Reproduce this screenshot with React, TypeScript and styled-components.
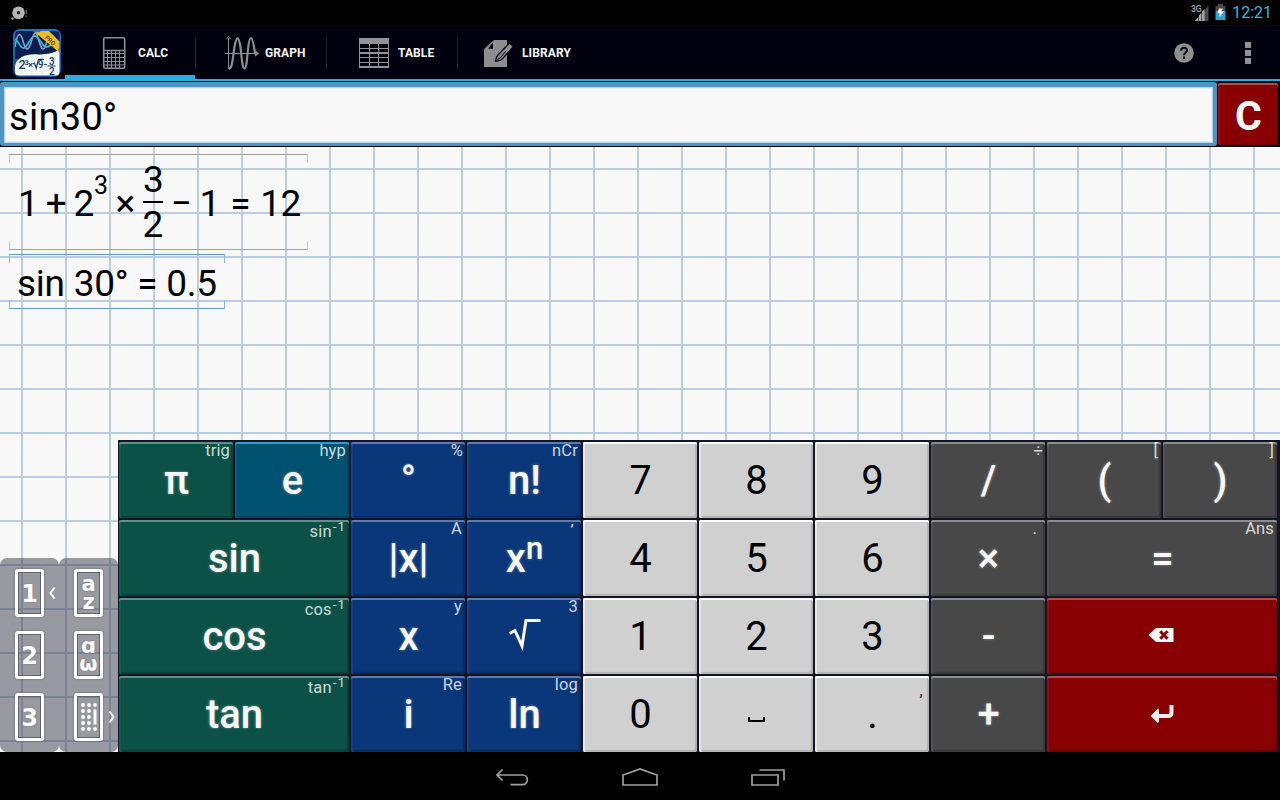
import React from "react";
import styled, { createGlobalStyle } from "styled-components";

const Global = createGlobalStyle`
  * { box-sizing: border-box; }
  body { margin: 0; background: #000; font-family: Roboto, "Liberation Sans", sans-serif; }
`;

const Screen = styled.div`
  width: 1280px;
  height: 800px;
  display: flex;
  flex-direction: column;
  overflow: hidden;
  background: #000;
`;

const StatusBar = styled.header`
  height: 25px;
  display: flex;
  align-items: center;
  justify-content: space-between;
  padding: 0 8px 0 10px;
`;

const StatusRight = styled.div`
  display: flex;
  align-items: center;
  gap: 5px;
`;

const Clock = styled.span`
  color: #33b5e5;
  font-size: 16px;
  line-height: 25px;
  width: 40px;
  text-align: right;
`;

const ActionBar = styled.nav`
  height: 56px;
  display: flex;
  background: #01000f;
  border-top: 1px solid #0a0a14;
  border-bottom: 2px solid #30abdf;
`;

const Logo = styled.div`
  width: 65px;
  padding: 2px 0 0 12px;
  svg { display: block; }
`;

const Tab = styled.button<{ $active?: boolean; $width: number; $pad: number; $gap: number; $last?: boolean }>`
  width: ${(p) => p.$width}px;
  height: 53px;
  padding: 0 0 0 ${(p) => p.$pad}px;
  border: 0;
  background:
    linear-gradient(#30abdf, #30abdf) 0 100% / ${(p) => (p.$active ? "130px 4px" : "0 0")} no-repeat,
    linear-gradient(#24242e, #24242e) right 11px / ${(p) => (p.$last ? "0 0" : "1px 32px")} no-repeat;
  display: flex;
  align-items: flex-start;
  gap: ${(p) => p.$gap}px;
  color: #f5f5f5;
  font: 700 12px/55px Roboto, "Liberation Sans", sans-serif;
  letter-spacing: 0.1px;
  text-align: left;
  svg { flex: none; margin-top: 9px; }
`;

const Spacer = styled.div`
  flex: 1;
`;

const BarIcon = styled.div<{ $width: number }>`
  width: ${(p) => p.$width}px;
  display: flex;
  align-items: center;
  justify-content: center;
`;

const InputRow = styled.div`
  height: 66px;
  display: flex;
  padding: 1px 2px 1px 0;
  gap: 1px;
`;

const Entry = styled.div`
  flex: none;
  width: 1217px;
  height: 64px;
  border: 4px solid #4f95c2;
  border-width: 5px 4px 3px;
  border-radius: 3px;
  background: #f8f8f8;
  box-shadow: inset 0 0 0 1px #b9d3e8, inset 0 0 0 2px #e6eef5;
  padding: 0 0 0 5px;
  color: #000;
  font-size: 38px;
  letter-spacing: 0.3px;
  line-height: 60px;
`;

const ClearKey = styled.button`
  flex: none;
  width: 60px;
  height: 62px;
  margin-top: 1px;
  padding: 0 0 0 1px;
  border: 0;
  border-radius: 2px;
  background: #880000;
  box-shadow: inset 0 2px 0 #b84c4c, inset 2px 0 1px #981010, inset -1px -1px 1px #6c0000;
  color: #f8f8f8;
  font: 700 41px/66px Roboto, "Liberation Sans", sans-serif;
`;

const Workspace = styled.main`
  height: 605px;
  display: flex;
  flex-direction: column;
  background:
    linear-gradient(90deg, #bbcde1 2px, transparent 2px) 21px 0 / 44px 44px,
    linear-gradient(#bbcde1 2px, transparent 2px) 0 21px / 44px 44px,
    #f8f8f8;
`;

const History = styled.section`
  height: 293px;
  display: flex;
  flex-direction: column;
  align-items: flex-start;
  gap: 4px;
  padding: 7px 0 0 9px;
`;

const HistoryItem = styled.div<{ $color: string; $side: string; $width: number; $height: number }>`
  position: relative;
  width: ${(p) => p.$width}px;
  height: ${(p) => p.$height}px;
  display: flex;
  align-items: center;
  padding-left: 8px;
  font-size: 37px;
  color: #000;
  &::before, &::after {
    content: "";
    position: absolute;
    left: 0;
    right: 0;
    height: 8px;
    border: 1px solid ${(p) => p.$side};
  }
  &::before { top: 0; border-bottom: 0; border-top-color: ${(p) => p.$color}; }
  &::after { bottom: 0; border-top: 0; border-bottom-color: ${(p) => p.$color}; }
`;

const Term = styled.span<{ $width: number }>`
  width: ${(p) => p.$width}px;
  flex: none;
  padding-top: 4px;
  line-height: 44px;
  letter-spacing: -0.6px;
  text-align: center;
  white-space: pre;
`;

const Exponent = styled(Term)`
  font-size: 25px;
  padding: 0 0 32px;
`;

const Fraction = styled.span`
  width: 20px;
  display: flex;
  flex-direction: column;
  align-items: center;
  line-height: 44px;
`;

const FractionPart = styled.span<{ $top?: boolean }>`
  height: 44px;
  ${(p) => (p.$top ? "border-bottom: 2px solid #000; width: 20px; height: 46px; line-height: 46px; text-align: center;" : "")}
`;

const Result = styled.span`
  line-height: 55px;
  padding-top: 4px;
  white-space: pre;
  letter-spacing: -0.25px;
`;

const Lower = styled.section`
  height: 312px;
  display: flex;
  align-items: flex-end;
`;

const Drawer = styled.aside`
  width: 59px;
  height: 194px;
  border-radius: 7px;
  background: rgba(56, 57, 74, 0.5);
  display: flex;
  flex-direction: column;
  gap: 14px;
  padding: 11px 0 0 15px;
`;

const DrawerRow = styled.div`
  display: flex;
  align-items: center;
  height: 48px;
  gap: 5px;
`;

const Switch = styled.button`
  width: 29px;
  height: 48px;
  flex: none;
  padding: 0;
  border: 3px solid #fff;
  border-radius: 3px;
  background: none;
  box-shadow: 0 0 2px #55555c, inset 0 0 0 1px #62626a;
  display: flex;
  flex-direction: column;
  align-items: center;
  justify-content: center;
  color: #fff;
  text-shadow: 0 0 2px #77777d;
  font: 700 24px/24px "DejaVu Sans", sans-serif;
`;

const Numeral = styled.span`
  padding-top: 2px;
`;

const Letter = styled.span`
  font-size: 21px;
  line-height: 18px;
  height: 18px;
`;

const Keypad = styled.div`
  width: 1162px;
  height: 312px;
  padding: 2px 3px 0 1px;
  background: #131426;
  display: grid;
  grid-template-columns: repeat(10, 114px);
  grid-auto-rows: 76px;
  gap: 2px;
`;

const tones = {
  green: { bg: "#0b5147", top: "#5f9187", side: "#126052", low: "#084038", fg: "#f8f8f8" },
  teal: { bg: "#00506f", top: "#23a0d4", side: "#075d83", low: "#004059", fg: "#f8f8f8" },
  blue: { bg: "#093779", top: "#5c7bae", side: "#17458a", low: "#072a60", fg: "#f8f8f8" },
  light: { bg: "#d0d0d0", top: "#fafafa", side: "#e9e9e9", low: "#b2b2b2", fg: "#000" },
  dark: { bg: "#484848", top: "#8d8d8d", side: "#535353", low: "#393939", fg: "#f8f8f8" },
  red: { bg: "#880000", top: "#b84c4c", side: "#990c0c", low: "#700000", fg: "#f8f8f8" },
};
type Tone = keyof typeof tones;

const Key = styled.button<{ $tone: Tone; $span?: number }>`
  position: relative;
  grid-column: span ${(p) => p.$span || 1};
  padding: 0 0 0 1px;
  border: 0;
  border-radius: 2px;
  background: ${(p) => tones[p.$tone].bg};
  box-shadow: inset 0 2px 0 ${(p) => tones[p.$tone].top}, inset 2px 0 1px ${(p) => tones[p.$tone].side},
    inset -2px -2px 1px ${(p) => tones[p.$tone].low};
  color: ${(p) => tones[p.$tone].fg};
  font: ${(p) => (p.$tone === "light" ? 400 : 500)} 40px/78px Roboto, "Liberation Sans", sans-serif;
  text-shadow: ${(p) => (p.$tone === "light" ? "none" : "0 0 3px rgba(255,255,255,.4)")};
  display: flex;
  justify-content: center;
  align-items: center;
`;

const Label = styled.span`
  height: 76px;
  white-space: pre;
`;

const Raised = styled.span`
  font-size: 31px;
  position: relative;
  top: -13px;
`;

const Hint = styled.span<{ $top?: number; $right?: number; $dark?: boolean }>`
  position: absolute;
  top: ${(p) => p.$top ?? -1}px;
  right: ${(p) => p.$right ?? 3}px;
  color: ${(p) => (p.$dark ? "#222" : "rgba(255,255,255,.8)")};
  font-size: 16.5px;
  font-weight: 400;
  line-height: 19px;
  letter-spacing: 0.15px;
  text-shadow: none;
`;

const HintPower = styled.span`
  font-size: 13.5px;
  letter-spacing: 1px;
  margin-left: 1px;
  position: relative;
  top: -6px;
`;

const NavBar = styled.footer`
  height: 48px;
  display: flex;
  justify-content: center;
  align-items: center;
  padding-top: 3px;
  background: #000;
`;

const NavButton = styled.div`
  width: 128px;
  display: flex;
  justify-content: center;
  svg { display: block; }
`;

const SpoolIcon = () => (
  <svg width="18" height="16" viewBox="0 0 18 16">
    <circle cx="8.5" cy="7.7" r="6.3" fill="#b4b4b4" />
    <circle cx="8.5" cy="7.7" r="1.7" fill="#222" />
    <circle cx="2.6" cy="13.5" r="1.3" fill="#999" />
    <path d="M16.2 5v4M16.2 10.5v1.4" stroke="#777" strokeWidth="1.2" />
  </svg>
);

const SignalIcon = () => (
  <svg width="20" height="20" viewBox="0 0 20 20">
    <text x="1" y="8.500" fontFamily="Roboto" fontWeight="500" fontSize="8.5" fill="#aaa">3G</text>
    <path d="M5 18L18.500 2.500v15.500z" fill="#4b4b4b" />
    <path d="M5 18l3-3.500V18zM9 18v-5.500l2.200-2.700V18zM12.200 18V8.500l2.300-2.800V18z" fill="#a8a8a8" />
  </svg>
);

const BatteryIcon = () => (
  <svg width="12" height="17" viewBox="0 0 12 17">
    <path d="M3 0h5v2h2.500v5h-10V2H3z" fill="#484848" />
    <path d="M.5 7h10v9H.5z" fill="#2fa5d2" />
    <path d="M4 4.500h4L6.500 7.500h2.300L4.500 13V9H2.500z" fill="#f2f2f2" />
  </svg>
);

const AppLogo = () => (
  <svg width="50" height="50" viewBox="0 0 50 50">
    <defs>
      <clipPath id="tile"><rect x="3" y="3" width="44.500" height="44.500" rx="4" /></clipPath>
      <linearGradient id="rim" x1="0" y1="0" x2="0" y2="1">
        <stop offset="0" stopColor="#1377cf" /><stop offset="1" stopColor="#0b4f9c" />
      </linearGradient>
    </defs>
    <rect x="1" y="1" width="48" height="48" rx="6.500" fill="url(#rim)" />
    <g clipPath="url(#tile)">
      <path d="M3 3h45v28H3z" fill="#061f4e" />
      <path d="M3 38C5 29 15 25.500 26 26.500C36 26 44 25 49 20V48H3z" fill="#f6fafc" />
      <path d="M10 31v17M20 27v20M30 27v20M40 25v22M3 43h45" stroke="#cfe9f3" strokeWidth=".7" />
      <path d="M3 19C5.500 3 8.500 4 11 13S16 25 19.500 13S24.500 4 27 13S32 25 35 13S39 5 42 18" fill="none" stroke="#9b98e6" strokeWidth="1.600" />
      <path d="M3 11C7 13 8 21 12 20C16 19 18 8 23 8C28 9 30 19 34 19C38 19 40 14 45 16" fill="none" stroke="#27c7bd" strokeWidth="1.700" />
      <path d="M20 2h16l12 12v11z" fill="#efbb2e" />
      <path d="M20 2h6l3 2-6 .5zM48 20v6l-2-5z" fill="#8c6714" />
    </g>
    <text x="32.500" y="10" transform="rotate(43 32.500 10)" fontFamily="Roboto" fontWeight="500" fontSize="6" fill="#4c3a12">PRO</text>
    <g fontFamily="Roboto" fontWeight="500" fill="#173b69">
      <text x="6.500" y="40.500" fontSize="12.500">2</text><text x="12.500" y="36.500" fontSize="7.500">3</text>
      <text x="16" y="40" fontSize="9.500">×</text><text x="25.800" y="40" fontSize="10">9</text>
      <text x="31.500" y="40" fontSize="11">-</text><text x="37" y="36.500" fontSize="10">3</text><text x="37" y="46.500" fontSize="10">2</text>
    </g>
    <path d="M21 36l1.500-.8 1.800 5L26.500 31.300h5.500M35.500 38h8" fill="none" stroke="#173b69" strokeWidth="1.200" />
  </svg>
);

const CalcIcon = () => (
  <svg width="26" height="36" viewBox="0 0 26 36" fill="none" stroke="#8f8f91">
    <rect x="2.700" y="2.800" width="21" height="30.500" rx="1.500" strokeWidth="1.600" />
    <path d="M2.700 15.500h21" strokeWidth="1.500" />
    <path d="M3 18.500h20M3 22.500h20M3 26.500h20M3 30h20M6.500 16v17M10.500 16v17M14.500 16v17M18.500 16v17" strokeWidth="1.100" />
  </svg>
);

const GraphIcon = () => (
  <svg width="36" height="36" viewBox="0 0 36 36" fill="none" stroke="#8f8f91">
    <path d="M4.500 3v31M1 18.500h31M2.500 4l2-2.500 2 2.500" strokeWidth="1" />
    <path d="M31 15.800l4 2.700-4 2.700z" fill="#8f8f91" strokeWidth=".5" />
    <path d="M4.500 33C8 36 8.500 24 10.500 12C12.500 .5 14.500 .5 16.500 12C18 26 18.500 33.500 20.500 33.500C22.500 33.500 23 24 24 14C25 5 26 3 27 3C29 3 30 12 31 18.500" strokeWidth="2.200" />
  </svg>
);

const TableIcon = () => (
  <svg width="32" height="36" viewBox="0 0 32 36" fill="none" stroke="#939393">
    <path d="M1 3h30v6H1z" fill="#939393" stroke="none" />
    <path d="M1.500 3v30M11.500 9v23M20.500 9v23M30.500 3v30" strokeWidth="1" />
    <path d="M1 13.500h30M1 22.500h30M1 27.500h30" strokeWidth="1" />
    <path d="M1 18h30M1 32h30" strokeWidth="2" />
  </svg>
);

const LibraryIcon = () => (
  <svg width="31" height="36" viewBox="0 0 31 36">
    <path d="M11 5H24v27H1V14z" fill="#8d8d8d" />
    <path d="M5 13.500l5-6v6.500z" fill="#01000f" />
    <path d="M26.500 8L17.500 17.500Q13 21 12.500 26Q18 26.500 21.500 21.500L30.500 11.500z" fill="#8d8d8d" stroke="#01000f" strokeWidth="1.300" />
    <path d="M13.500 25.500Q17 24 22.500 16.500" stroke="#01000f" fill="none" />
  </svg>
);

const RootIcon = () => (
  <svg width="34" height="38" viewBox="0 0 34 38">
    <path d="M1.500 16.500l5.500-3 7 15.500L18 3.500h14.500" fill="none" stroke="#f8f8f8" strokeWidth="3" />
  </svg>
);

const SpaceIcon = () => (
  <svg width="17" height="76" viewBox="0 0 17 76">
    <path d="M1 41v4h15v-4" fill="none" stroke="#000" strokeWidth="2" />
  </svg>
);

const GlyphShift = styled.span<{ $x: number; $y: number }>`
  display: flex;
  padding: 0 ${(p) => p.$x}px ${(p) => p.$y}px 0;
`;

const DeleteIcon = () => (
  <GlyphShift $x={3} $y={3}>
    <svg width="26" height="16" viewBox="0 0 26 16">
      <path d="M.5 8L8 1H25.500v14H8z" fill="#f8f8f8" />
      <path d="M12.200 4.200l7.400 7.600M19.600 4.200l-7.400 7.600" stroke="#880000" strokeWidth="3" />
    </svg>
  </GlyphShift>
);

const EnterIcon = () => (
  <GlyphShift $x={1} $y={1}>
    <svg width="24" height="20" viewBox="0 0 24 20">
      <path d="M21.500 1v7.500q0 3.500-3.500 3.500H8" fill="none" stroke="#eee" strokeWidth="4" />
      <path d="M.5 12l7.500-7.500 1 1v12l-1 1.500z" fill="#eee" />
    </svg>
  </GlyphShift>
);

const DotsIcon = () => (
  <svg width="18" height="30" viewBox="0 0 18 30">
    {[2, 8, 14, 20, 26].map((y) => [3, 9, 15].map((x) => (
      x === 15 && y > 2 && y < 26 ? null : <circle key={`${x}-${y}`} cx={x} cy={y + 1} r="1.900" fill="#fff" />
    )))}
    <path d="M15 7.500v15" stroke="#fff" strokeWidth="3" />
  </svg>
);

const Chevron = ({ right }: { right?: boolean }) => (
  <svg width="7" height="14" viewBox="0 0 7 14">
    <path d={right ? "M1.500 1.500l4 5.500-4 5.500" : "M5.500 1.500l-4 5.500 4 5.500"} fill="none" stroke="#fff" strokeWidth="2" />
  </svg>
);

type KeySpec = { tone: Tone; label?: string; art?: React.ReactNode; raised?: string; hint?: React.ReactNode; span?: number; hintTop?: number; hintRight?: number };

const inverse = (name: string) => <>{name}<HintPower>-1</HintPower></>;

const keys: KeySpec[] = [
  { tone: "green", label: "π", hint: "trig" },
  { tone: "teal", label: "e", hint: "hyp" },
  { tone: "blue", label: "°", hint: "%", hintRight: 2 },
  { tone: "blue", label: "n!", hint: "nCr" },
  { tone: "light", label: "7" },
  { tone: "light", label: "8" },
  { tone: "light", label: "9" },
  { tone: "dark", label: "/", hint: "÷", hintRight: 2 },
  { tone: "dark", label: "(", hint: "[" },
  { tone: "dark", label: ")", hint: "]" },
  { tone: "green", label: "sin", hint: inverse("sin"), span: 2, hintTop: 2 },
  { tone: "blue", label: "|x|", hint: "A" },
  { tone: "blue", label: "x", raised: "n", hint: "‚", hintTop: -10, hintRight: 7 },
  { tone: "light", label: "4" },
  { tone: "light", label: "5" },
  { tone: "light", label: "6" },
  { tone: "dark", label: "×", hint: ".", hintRight: 8 },
  { tone: "dark", label: "=", hint: "Ans", span: 2 },
  { tone: "green", label: "cos", hint: inverse("cos"), span: 2, hintTop: 2 },
  { tone: "blue", label: "x", hint: "y" },
  { tone: "blue", art: <RootIcon />, hint: "3" },
  { tone: "light", label: "1" },
  { tone: "light", label: "2" },
  { tone: "light", label: "3" },
  { tone: "dark", label: "-" },
  { tone: "red", art: <DeleteIcon />, span: 2 },
  { tone: "green", label: "tan", hint: inverse("tan"), span: 2, hintTop: 2 },
  { tone: "blue", label: "i", hint: "Re" },
  { tone: "blue", label: "ln", hint: "log" },
  { tone: "light", label: "0" },
  { tone: "light", art: <SpaceIcon /> },
  { tone: "light", label: ".", hint: ",", hintTop: 5, hintRight: 6 },
  { tone: "dark", label: "+" },
  { tone: "red", art: <EnterIcon />, span: 2 },
];

export default function App() {
  return (
    <Screen>
      <Global />
      <StatusBar>
        <SpoolIcon />
        <StatusRight>
          <SignalIcon />
          <BatteryIcon />
          <Clock>12:21</Clock>
        </StatusRight>
      </StatusBar>
      <ActionBar>
        <Logo><AppLogo /></Logo>
        <Tab $active $width={131} $pad={36} $gap={11}><CalcIcon />CALC</Tab>
        <Tab $width={131} $pad={28} $gap={5}><GraphIcon />GRAPH</Tab>
        <Tab $width={131} $pad={31} $gap={8}><TableIcon />TABLE</Tab>
        <Tab $width={140} $pad={25} $gap={8} $last><LibraryIcon />LIBRARY</Tab>
        <Spacer />
        <BarIcon $width={64}>
          <svg width="20" height="20" viewBox="0 0 20 20">
            <circle cx="10" cy="10" r="9.800" fill="#8f8f8f" />
            <path d="M7 7.600Q7.200 4.800 10 4.800T13 7.500C13 9.500 10 9.500 10 12.300M10 13.500v2.500" fill="none" stroke="#0a0a12" strokeWidth="2.100" />
          </svg>
        </BarIcon>
        <BarIcon $width={64}>
          <svg width="6" height="22" viewBox="0 0 6 22"><path d="M0 0h6v6H0zM0 8h6v6H0zM0 16h6v6H0z" fill="#929292" /></svg>
        </BarIcon>
      </ActionBar>
      <InputRow>
        <Entry>sin30°</Entry>
        <ClearKey>C</ClearKey>
      </InputRow>
      <Workspace>
        <History>
          <HistoryItem $color="#9f9f9f" $side="#c8c8c8" $width={299} $height={96}>
            <Term $width={22}>1</Term>
            <Term $width={34}>+</Term>
            <Term $width={21}>2</Term>
            <Exponent $width={13}>3</Exponent>
            <Term $width={36}>×</Term>
            <Fraction><FractionPart $top>3</FractionPart><FractionPart>2</FractionPart></Fraction>
            <Term $width={36}>−</Term>
            <Term $width={21}>1</Term>
            <Term $width={40}>=</Term>
            <Term $width={41}>12</Term>
          </HistoryItem>
          <HistoryItem $color="#5e9dc8" $side="#8fb9da" $width={216} $height={55}>
            <Result>sin 30° = 0.5</Result>
          </HistoryItem>
        </History>
        <Lower>
          <Drawer>
            <DrawerRow><Switch><Numeral>1</Numeral></Switch><Chevron /></DrawerRow>
            <DrawerRow><Switch><Numeral>2</Numeral></Switch></DrawerRow>
            <DrawerRow><Switch><Numeral>3</Numeral></Switch></DrawerRow>
          </Drawer>
          <Drawer>
            <DrawerRow><Switch><Letter>a</Letter><Letter>z</Letter></Switch></DrawerRow>
            <DrawerRow><Switch><Letter>ɑ</Letter><Letter>ω</Letter></Switch></DrawerRow>
            <DrawerRow><Switch><DotsIcon /></Switch><Chevron right /></DrawerRow>
          </Drawer>
          <Keypad>
            {keys.map((k, i) => (
              <Key key={i} $tone={k.tone} $span={k.span}>
                {k.art}
                {k.label && <Label>{k.label}{k.raised && <Raised>{k.raised}</Raised>}</Label>}
                {k.hint && <Hint $top={k.hintTop} $right={k.hintRight} $dark={k.tone === "light"}>{k.hint}</Hint>}
              </Key>
            ))}
          </Keypad>
        </Lower>
      </Workspace>
      <NavBar>
        <NavButton>
          <svg width="34" height="20" viewBox="0 0 34 20" fill="none" stroke="#a0a0a0" strokeWidth="1.700">
            <path d="M7.500 1.500L2 7l5.500 5.500M2 7h25.500a4.700 4.700 0 0 1 0 9.700H15.500" />
          </svg>
        </NavButton>
        <NavButton>
          <svg width="36" height="20" viewBox="0 0 36 20" fill="none" stroke="#a0a0a0" strokeWidth="1.700">
            <path d="M1 17V7L18 1l17 6v10z" />
          </svg>
        </NavButton>
        <NavButton>
          <svg width="34" height="20" viewBox="0 0 34 20" fill="none" stroke="#a0a0a0" strokeWidth="1.700">
            <path d="M1 7h26v10H1zM8.500 2H33v10.500" />
          </svg>
        </NavButton>
      </NavBar>
    </Screen>
  );
}
